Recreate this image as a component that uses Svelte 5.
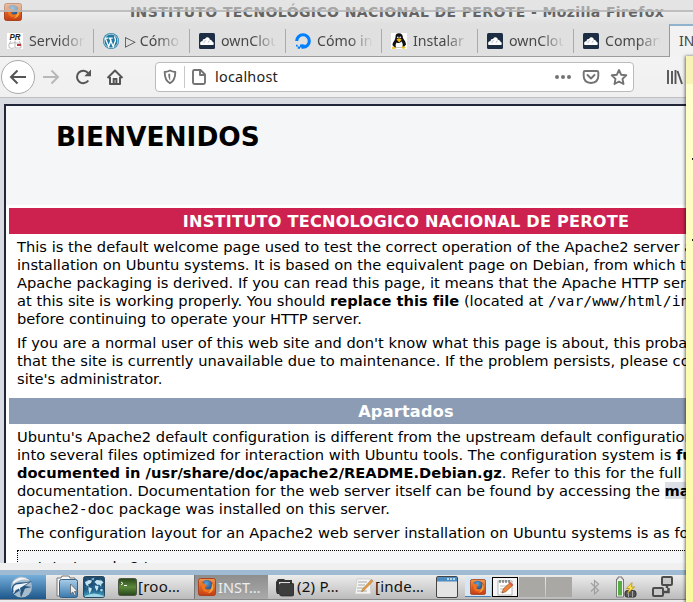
<script>
  const tabs = [
    { icon: 'pr', label: 'Servidor' },
    { icon: 'wp', label: '▷ Cómo' },
    { icon: 'cloud', label: 'ownCloud' },
    { icon: 'ocean', label: 'Cómo ins' },
    { icon: 'tux', label: 'Instalar y' },
    { icon: 'cloud', label: 'ownCloud' },
    { icon: 'cloud', label: 'Compart' }
  ];
</script>

{#snippet firefox(size)}
  <svg width={size} height={size} viewBox="0 0 18 18">
    <defs>
      <linearGradient id="ffo" x1="0" y1="0" x2="0" y2="1"><stop offset="0" stop-color="#ee9a50" /><stop offset="1" stop-color="#c23a12" /></linearGradient>
      <radialGradient id="ffb" cx=".4" cy=".3" r=".7"><stop offset="0" stop-color="#5aa5da" /><stop offset="1" stop-color="#1b4078" /></radialGradient>
    </defs>
    <rect x=".5" y=".5" width="17" height="17" rx="2" fill="url(#ffo)" stroke="#a8431d" />
    <circle cx="9.300" cy="9" r="6.800" fill="#dd4f17" />
    <path d="M4.200 4Q8 .8 12 3q3.500 2.500 2.500 7-1.500 3.500-5 3.200Q6 12.800 5.500 10L9 9.300 7.500 7 5 6.500Z" fill="url(#ffb)" />
    <path d="M2.500 4 4 2.800 5 5.500 7.300 6 8.800 7.300 7 9q0 2.500 3 2.500 2.500 0 4-2-1.500 5-6 4.500Q3 13 2.500 4Z" fill="#ee7420" />
    <path d="M14 5q2.500 3 1.200 6.500Q13.500 15 9.500 15.500 14 12 14 5Z" fill="#f5a13a" />
  </svg>
{/snippet}

{#snippet tabIcon(kind)}
  <svg class="fav" width="16" height="16" viewBox="0 0 16 16">
    {#if kind === 'pr'}
      <rect width="16" height="16" fill="#fff" />
      <text x="2.500" y="7" font-size="8.500" font-weight="700" font-style="italic" font-family="Liberation Sans, sans-serif" textLength="11" lengthAdjust="spacingAndGlyphs" fill="#222">PR</text>
      <path d="M4 8Q1 11 2 14.500 4 16 7.500 15M8 7.500V15M12 8q3 3 2 7H8M2 10.500q5-1.500 12 0" fill="none" stroke="#aaa" stroke-width=".8" />
      <rect x="10" y="11" width="4" height="2" fill="#b33" />
    {:else if kind === 'wp'}
      <circle cx="8" cy="8" r="8" fill="#2079a2" />
      <circle cx="8" cy="8" r="6.900" fill="none" stroke="#d8e9f0" stroke-width=".8" />
      <path d="M2.300 5.200 5.700 13.500 8 7.500 7 5M6.700 5.200 10.200 13.500 12.400 7.800C13 6 11.200 5.200 11.700 3.500M1.900 5.100h3.500M6 5.100h3.700" fill="none" stroke="#fff" stroke-width="1.300" />
    {:else if kind === 'cloud'}
      <rect width="16" height="16" rx="1.500" fill="#1d2d44" />
      <path d="M1.500 12C.3 9 2.200 8 3.500 8.300 3.600 5.800 5.500 5.700 6 6.200 7 3.200 11 4 10.800 6.800 12.600 6.300 13 8 12.900 8.500 14.800 8.500 15 11 14.400 12Z" fill="#fff" />
      <path d="M5 10.500q-1-3 2-3M9 10q0-2.500 2-2" fill="none" stroke="#8d97a5" stroke-width=".5" />
    {:else if kind === 'ocean'}
      <path d="M1.700 8A6.300 6.300 0 1 1 8 14.300V11.500" fill="none" stroke="#0080ff" stroke-width="3.100" />
      <path d="M5 11.500h3v3H5zM2.700 13.500h2.300v2.300H2.700zM1 11.800h1.700v1.700H1z" fill="#0080ff" />
    {:else}
      <rect width="16" height="16" fill="#fff" />
      <path d="M4.500 3.500Q4.500.3 8 .3t3.800 3.700c0 2 3.200 4 3.200 7.500l-2.500 3H3.500L1.500 12C1.500 9 4.500 7.500 4.500 3.500Z" fill="#111" />
      <path d="M5.500 9.500q2.500 1.500 5-1 2.200 3 .5 6H5q-1-3 .5-5Z" fill="#fff" />
      <circle cx="6.800" cy="4.300" r=".9" fill="#ddd" /><circle cx="9.300" cy="4.300" r=".9" fill="#ddd" />
      <path d="m5.500 6.500 2.500-1.300 2.700 1.300L8.300 9.500ZM1 14.700l1.500-2 2.500 3-4 .1ZM11 15.500l.3-2.500 1.700.5 2 1.200-2 1.100Z" fill="#f5bd16" />
    {/if}
  </svg>
{/snippet}

<div class="screen">
  <div class="titlebar">
    <span class="appicon">{@render firefox(18)}</span>
    <span class="title">INSTITUTO TECNOLÓGICO NACIONAL DE PEROTE - Mozilla Firefox</span>
    <div class="veil"></div>
  </div>

  <div class="tabs">
    {#each tabs as t}
      <div class="tab">
        {@render tabIcon(t.icon)}
        <span class="label">{t.label}</span>
      </div>
    {/each}
    <div class="active">INSTITUTO</div>
  </div>

  <div class="toolbar">
    <svg class="nav" width="156" height="40" viewBox="0 57 156 40" fill="none" stroke="#555557" stroke-width="2">
      <circle cx="18" cy="77" r="16.500" fill="#fff" stroke="#aaa" stroke-width="1" />
      <path d="M11.500 77H26M17.500 70.500 11 77l6.500 6.500" />
      <path d="M43 77h14.500M51.500 70.500 58 77l-6.500 6.500" stroke="#b8b8b9" />
      <path d="M88.300 80.500A6.200 6.200 0 1 1 88 73" /><path d="M91 69.500v6.700h-6.700Z" fill="#555557" stroke="none" />
      <path d="M107.500 78 115 70.500l7.500 7.500M110 77v7h10v-7" stroke-linejoin="round" /><path d="M113.700 84v-5h2.700v5" />
    </svg>
    <div class="url">
      <svg width="52" height="28" viewBox="156 63 52 28" fill="none" stroke="#737374" stroke-width="1.900">
        <path d="M164.700 72q3-.2 5.300-1.500 2.300 1.300 5.300 1.500 0 8.500-5.300 11.200-5.300-2.700-5.300-11.200Z" stroke-linejoin="round" />
        <path d="M168.300 73.800h1.900v6.800q-2-1.500-1.900-6.800Z" fill="#737374" stroke="none" />
        <path d="M184.500 66v22" stroke="#c8c8c8" stroke-width="1" />
        <path d="M194.500 70h6l4.500 4.500v8q0 1.500-1.500 1.500h-9q-1.500 0-1.500-1.500v-11q0-1.500 1.500-1.500ZM200 70v5h5" stroke-linejoin="round" />
      </svg>
      <span class="host">localhost</span>
      <svg class="actions" width="80" height="28" viewBox="553 63 80 28" fill="none" stroke="#737374" stroke-width="1.900">
        <g fill="#737374" stroke="none"><circle cx="557" cy="77" r="2" /><circle cx="563" cy="77" r="2" /><circle cx="569" cy="77" r="2" /></g>
        <path d="M585 71h12q1.300 0 1.300 1.300V76q0 6.500-7.300 7-7.300-.5-7.300-7v-3.700Q583.700 71 585 71ZM587.500 75l3.500 3.500 3.500-3.500" stroke-linecap="round" stroke-linejoin="round" />
        <path d="m619 70 2.100 4.700 5.200.6-3.800 3.600 1 5.100-4.500-2.500-4.500 2.500 1-5.100-3.800-3.600 5.200-.6Z" stroke-linejoin="round" />
      </svg>
    </div>
    <svg class="lib" width="18" height="16" viewBox="666 69 18 16" fill="none" stroke="#555557" stroke-width="1.900"><path d="M668 70v14M672 71v13M675.500 70v14M677.500 71l4.500 13" /></svg>
  </div>

  <div class="viewport">
    <div class="page">
      <header><h1>BIENVENIDOS</h1></header>
      <div class="content">
        <h2 class="red">INSTITUTO TECNOLOGICO NACIONAL DE PEROTE</h2>
        <div class="text first">
          <p>This is the default welcome page used to test the correct operation of the Apache2 server after<br />
            installation on Ubuntu systems. It is based on the equivalent page on Debian, from which the Ubuntu<br />
            Apache packaging is derived. If you can read this page, it means that the Apache HTTP server installed<br />
            at this site is working properly. You should <b>replace this file</b> (located at <code>/var/www/html/index.html</code>)<br />
            before continuing to operate your HTTP server.</p>
          <p>If you are a normal user of this web site and don't know what this page is about, this probably means<br />
            that the site is currently unavailable due to maintenance. If the problem persists, please contact the<br />
            site's administrator.</p>
        </div>
        <h2 class="blue">Apartados</h2>
        <div class="text">
          <p>Ubuntu's Apache2 default configuration is different from the upstream default configuration, and split<br />
            into several files optimized for interaction with Ubuntu tools. The configuration system is <b>fully<br />
            documented in /usr/share/doc/apache2/README.Debian.gz</b>. Refer to this for the full<br />
            documentation. Documentation for the web server itself can be found by accessing the <b class="man">manual</b> if the<br />
            <code>apache2-doc</code> package was installed on this server.</p>
          <p>The configuration layout for an Apache2 web server installation on Ubuntu systems is as follows:</p>
          <pre>/etc/apache2/</pre>
        </div>
      </div>
    </div>
  </div>

  <div class="status"></div>
  <div class="edge"></div>
  <div class="taskbar">
    <div class="start">
      <svg width="46" height="24" viewBox="0 0 46 24"><circle cx="21.500" cy="12" r="10.500" fill="#a9bccb" /><path d="M12 18Q10 8 20 7.500q5 0 12-1.500l-7 5 7 1-7 1.500L21 22.500l-1.500-7L13 20l3.500-6Z" fill="#245684" /><path d="M14 18Q11 9 20 9l9-1.500-9 5.500 1 6-2-5.500-4 2Z" fill="#eef3f7" /><path d="M13 7Q20-1 29 5 20 3 13 9Z" fill="#f2f5f8" /></svg>
    </div>
    <svg class="launch" width="50" height="24" viewBox="56 0 50 24">
      <defs>
        <linearGradient id="fm" x1="0" y1="0" x2="0" y2="1"><stop offset="0" stop-color="#a9cde8" /><stop offset="1" stop-color="#3979ae" /></linearGradient>
        <linearGradient id="gl" x1="0" y1="0" x2="0" y2="1"><stop offset="0" stop-color="#214a6c" /><stop offset=".6" stop-color="#17557f" /><stop offset="1" stop-color="#4dabcb" /></linearGradient>
      </defs>
      <path d="M57 3h4l1-2h7l1 2h5v18H57Z" fill="#f8f8f8" stroke="#777" />
      <rect x="59.500" y="4.500" width="18" height="18" rx="2" fill="url(#fm)" stroke="#346084" />
      <path d="M70.500 9v10l2.300-2 1.700 3.500 1.500-.8-1.500-3.200 3-.3Z" fill="#eee" stroke="#555" stroke-width=".7" />
      <rect x="83.500" y="1.500" width="21" height="21" rx="2" fill="url(#gl)" stroke="#28475d" />
      <path d="m85 7 4-2 3 .5L91 8l-3 1.500 1 2-3-1.500ZM88.500 12l3.500 1.500-1 2.500-1.500 3-1-4ZM94.500 7l2-2 5 .5 2 2-2 1.500-.5 2.500-2-2-1.500.5ZM95 10.500l3.500.5-.5 3-1.500 2-1.500-3.500ZM100.500 14l2.500.5-1 2-1.700-.8ZM91 4l3-1-.5 2Z" fill="#c9e6f0" />
      <path d="M85 21q9-5 18.500 0v1H85Z" fill="#9cd6e6" />
      <path d="M84 12h20M94 2v20M88 3q-3 9 0 18M100 3q3 9 0 18" fill="none" stroke="#7dbbd5" stroke-opacity=".35" stroke-width=".6" />
    </svg>
    <div class="task t1">
      <svg width="19" height="18" viewBox="0 0 19 18"><defs><linearGradient id="tg" x1="0" y1="0" x2="0" y2="1"><stop offset="0" stop-color="#27471a" /><stop offset=".5" stop-color="#5b8839" /><stop offset="1" stop-color="#28451a" /></linearGradient></defs><rect x=".5" y=".5" width="18" height="17" rx="2" fill="url(#tg)" stroke="#4b5645" /><path d="m3 4 2 1.500L3 7M6 7.500h3" fill="none" stroke="#fff" /></svg>
      <span>[roo…</span>
    </div>
    <div class="task t2">{@render firefox(18)}<span>INST…</span></div>
    <div class="task t3">
      <svg width="18" height="19" viewBox="0 0 18 19"><path d="M0 4 2 1h6l1 1h7v4h-2V4H3v12H1Q0 14 0 12Z" fill="#333" /><path d="M3.500 7q0-1.500 1.500-1.500h12q1 0 1 1.500v9q0 2-2 2H6q-2.500 0-2.500-2Z" fill="#3d3d3d" stroke="#222" stroke-width=".7" /></svg>
      <span>(2) P…</span>
    </div>
    <div class="task t4">
      <svg width="20" height="18" viewBox="0 0 20 18"><path d="M2 1h13l1 15H0Z" fill="#f4f4f2" stroke="#c4c4c0" stroke-width=".7" /><path d="M3 4h9M3 7h7M2 10h7M2 13h10" stroke="#aaa" /><path d="m6.500 14 1-3 9-9.500 1.700 1.500L9 12.500Z" fill="#e79a3f" stroke="#8c6236" stroke-width=".4" /></svg>
      <span>[inde…</span>
    </div>
    <svg class="win" width="22" height="22" viewBox="0 0 22 22"><rect x=".5" y=".5" width="21" height="21" rx="1.500" fill="#e4e4e4" stroke="#444" /><path d="M1 1h20v4.500H1Z" fill="#4c8cc0" /><path d="M11 3h8" stroke="#d9ebf8" stroke-width="1.500" stroke-dasharray="2 1" /></svg>
    <div class="pager">
      <div class="desk on">{@render firefox(16)}</div>
      <div class="desk note-desk">
        <svg width="17" height="17" viewBox="0 0 17 17"><rect x="1" y="2" width="14" height="14" fill="#fff" stroke="#999" stroke-width=".7" /><path d="M3 1v3M6 1v3M9 1v3M12 1v3" stroke="#444" /><path d="M3 7h9M3 10h7M3 13h4" stroke="#bbb" /><path d="m5 14 1.200-4 7-6.500 2.600 2.700-7 6.500Z" fill="#ed8334" stroke="#8b4425" stroke-width=".6" /><path d="m12 4.500 1.500-1.500 2.500 2.500-1.300 1.500Z" fill="#d7594c" /></svg>
      </div>
      <div class="desk idle"></div>
      <div class="desk idle"></div>
    </div>
    <svg class="tray" width="100" height="24" viewBox="586 575 100 24" fill="none">
      <path d="m591 583 7.500 7.500-4 3.500v-13.500l4 3.500-7.500 7.500" stroke="#a0a0a0" stroke-width="1.200" />
      <path d="M618 577h4v2h1.500v18h-7v-18h1.500Z" fill="#eee" stroke="#777" />
      <rect x="618" y="581" width="4" height="14.500" fill="#57ad43" />
      <path d="M625 593q0-2.500 2.500-2.500h6q2.500 0 2.500 2.500v2q0 2-2 2h-7q-2 0-2-2Z" fill="#555" stroke="#333" /><path d="M628.500 591v6M632.500 591v6" stroke="#bbb" stroke-width=".8" />
      <path d="m632 582.500-5.500 6h3l-2 5 7-6.500h-3Z" fill="#ffe548" stroke="#b88b13" stroke-width=".8" />
      <g stroke="#4c4c4c" stroke-width="2"><rect x="662" y="577" width="10" height="8" rx="1" fill="#c8c8c8" /><rect x="653" y="588" width="10" height="8" rx="1" fill="#c8c8c8" /><path d="M667 585v3M664 592h4.500v-4" stroke-width="2.500" /></g>
    </svg>
  </div>
  <div class="bottom"></div>

  <aside class="note"><div class="notehead"></div><i class="d1"></i><i class="d2"></i></aside>
</div>

<style>
  :global(body) { margin: 0; overflow: hidden; }
  .screen { position: relative; width: 693px; height: 602px; overflow: hidden; display: flex; flex-direction: column; background: #f0f0f0; font-family: "Noto Sans", sans-serif; white-space: nowrap; }
  svg { display: block; flex: none; }
  .titlebar { position: relative; height: 24px; flex: none; display: flex; align-items: flex-start; background: linear-gradient(#ededed 11px, #e0e0e0); overflow: hidden; }
  .appicon { margin: 3px 0 0 4px; }
  .title { margin-left: 108px; font: bold 14px/24px "DejaVu Sans", sans-serif; letter-spacing: .39px; color: #646464; }
  .veil { position: absolute; inset: 0 0 auto; height: 10px; background: rgba(220, 220, 220, .55); border-bottom: 2px solid rgba(180, 180, 180, .8); }
  .tabs { display: flex; height: 32px; flex: none; background: #e0e0e0; border-bottom: 1px solid #9c9c9c; }
  .tab { display: flex; box-sizing: border-box; width: 96px; flex: none; padding: 9px 0 0 9px; position: relative; }
  .tab:first-child { width: 94px; padding-left: 7px; }
  .tab::after { content: ""; position: absolute; right: 0; top: 5px; width: 1px; height: 24px; background: #aaa; }
  .tab:nth-child(7)::after { display: none; }
  .label { width: 55px; height: 22px; margin: -3px 0 0 6px; overflow: hidden; font-size: 14.2px; line-height: 22px; color: #484848; mask-image: linear-gradient(90deg, #000 32px, transparent 56px); }
  .active { box-sizing: border-box; width: 40px; margin-left: -1px; height: 33px; padding-left: 9px; border-left: 1px solid #999; border-top: 2px solid #8fb2cf; background: #f2f2f2; font-size: 14px; line-height: 29px; color: #444; overflow: hidden; z-index: 1; }
  .toolbar { display: flex; align-items: center; height: 40px; flex: none; background: linear-gradient(#f3f3f3, #f0f0f0); border-bottom: 1px solid #c0c0c2; }
  .nav { margin-right: -1px; }
  .url { box-sizing: border-box; width: 479px; height: 30px; border: 1px solid #bbb; border-radius: 4px; background: #fff; display: flex; align-items: center; }
  .host { margin-left: 7px; font-size: 14.4px; letter-spacing: .25px; line-height: 24px; color: #222; }
  .actions { margin-left: auto; }
  .lib { margin-left: 32px; }
  .viewport { height: 465px; flex: none; overflow: hidden; background: #d8dbe2; box-sizing: border-box; padding: 6px 0 0 4px; font-family: "DejaVu Sans", sans-serif; color: #000; }
  .page { width: 800px; border: 2px solid #212738; background: #fff; height: 900px; }
  header { height: 99px; background: #f5f6f7; padding: 0 0 0 50px; }
  h1 { margin: 0; padding-top: 15px; font-size: 26.4px; line-height: 32px; }
  .content { padding: 3px; }
  h2 { box-sizing: border-box; margin: 0; height: 26px; padding-top: 1px; color: #fff; text-align: center; font-size: 16.13px; letter-spacing: .23px; line-height: 26px; }
  .red { background: #cd214f; }
  .blue { background: #8c9cb4; margin-top: 10px; }
  .text { padding: 4px 8px 0; font-size: 14.67px; line-height: 18px; letter-spacing: .012px; }
  p { margin: 0 0 6px; }
  .first p:last-child { margin-bottom: 0; }
  code, pre { font-family: "DejaVu Sans Mono", monospace; font-size: 14.67px; line-height: 16px; }
  .man { background: #dcdfe6; }
  pre { margin: 8px 0 0; padding: 8px 15px; border: 1px dotted #000; background: #f5f6f7; }
  .status { height: 7px; flex: none; background: #f0f0f0; }
  .edge { height: 5px; flex: none; background: #9fbad3; }
  .taskbar { height: 24px; flex: none; display: flex; align-items: center; background: linear-gradient(#ececec, #bcbcbc); border-bottom: 1px solid #888; font-size: 15px; letter-spacing: .25px; color: #111; }
  .start { width: 46px; height: 24px; background: linear-gradient(#76afdb, #1d578a); }
  .launch { margin-left: 10px; }
  .task { box-sizing: border-box; display: flex; align-items: center; height: 24px; flex: none; line-height: 22px; }
  .task span { margin-top: -2px; }
  .t1 { width: 88px; padding-left: 12px; }
  .t1 span { margin-left: 1px; }
  .t2 { width: 74px; padding-left: 3px; border-left: 1px solid #777; background: linear-gradient(#8e8e8e, #aaa); color: #eee; }
  .t2 span { margin-left: 2px; margin-top: 0; font-size: 14.5px; letter-spacing: 0; }
  .t3 { width: 80px; padding-left: 8px; }
  .t3 span { margin-left: 3px; }
  .t4 { width: 82px; padding-left: 7px; }
  .t4 span { margin-left: 0; }
  .win { margin: 0 7px 0 6px; }
  .pager { display: flex; gap: 1px; }
  .desk { width: 26px; height: 20px; display: flex; align-items: center; justify-content: center; box-sizing: border-box; background: #aaa8a4; }
  .on { background: #d6e6f3; border-bottom: 1px solid #4680b0; }
  .note-desk { background: #f5f5f5; border: 1px solid #000; }
  .tray { margin-left: 14px; }
  .bottom { height: 2px; background: #ececec; }
  .note { position: absolute; z-index: 3; left: 686px; top: 56px; width: 12px; height: 550px; background: linear-gradient(#ffffcf, #f9f99f); box-shadow: -1px 0 3px rgba(0, 0, 0, .55); }
  .notehead { height: 28px; background: #f7f3b5; }
  .note i { position: absolute; left: 6px; width: 4px; height: 2px; background: #222; }
  .d1 { top: 102px; }
  .d2 { top: 183px; }
</style>
